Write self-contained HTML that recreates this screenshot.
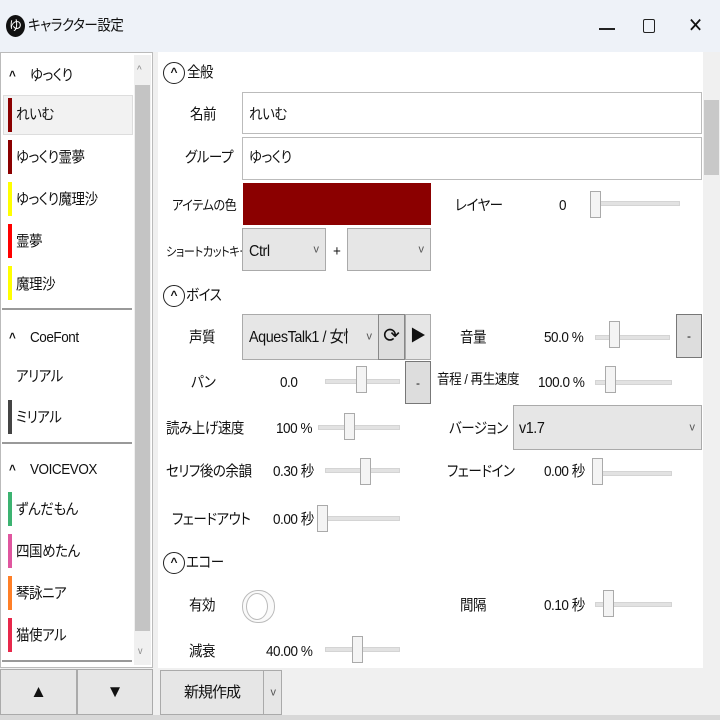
<!DOCTYPE html><html><head><meta charset="utf-8"><style>
*{margin:0;padding:0;box-sizing:border-box}
body{width:720px;height:720px;overflow:hidden;background:#f0f0f0;font-family:"Liberation Sans","Noto Sans CJK JP",sans-serif;font-size:15px;color:#111;position:relative;font-feature-settings:"palt"}
.a{position:absolute}
.t{position:absolute;white-space:nowrap;line-height:20px;transform:translateY(-10px) scaleX(0.9);transform-origin:0 50%;letter-spacing:-0.5px;font-feature-settings:"palt"}
.box{position:absolute;background:#fff;border:1px solid #bbb}
.cb{position:absolute;background:#e6e6e6;border:1px solid #aaa}
.cb i{position:absolute;right:6px;top:50%;transform:translateY(-55%);font-style:normal;font-size:11px;color:#555}
.tr{position:absolute;height:5px;background:#e2e2e2;border:1px solid #d4d4d4}
.th{position:absolute;width:11px;height:27px;background:#f4f4f4;border:1px solid #aaa}
.bar{position:absolute;left:8px;width:4px;height:34px}
.hc{position:absolute;width:22px;height:22px;border:1.5px solid #222;border-radius:50%;font-size:12px;text-align:center;line-height:19px;font-weight:bold}
</style></head><body>
<div class="a" style="left:0;top:0;width:720px;height:52px;background:#eef2f8"></div>
<div class="a" style="left:6px;top:15px;width:19px;height:22px;border-radius:50%;background:#111;color:#fff;font-size:13px;text-align:center;line-height:22px">ゆ</div>
<div class="t" style="left:28px;top:26px;font-size:15px">キャラクター設定</div>
<div class="a" style="left:599px;top:28px;width:16px;height:1.5px;background:#222"></div>
<div class="a" style="left:643px;top:19px;width:12px;height:14px;border:1.5px solid #222;border-radius:2px"></div>
<div class="t" style="left:688px;top:26px;font-size:20px;font-weight:300">✕</div>

<!-- left panel -->
<div class="a" style="left:0;top:52px;width:153px;height:616px;background:#fff;border:1px solid #bbb"></div>
<div class="a" style="left:134px;top:55px;width:17px;height:610px;background:#f0f0f0"></div>
<div class="a" style="left:135px;top:85px;width:15px;height:546px;background:#c4c4c4"></div>
<div class="t" style="left:137px;top:70px;font-size:11px;color:#888">^</div>
<div class="t" style="left:138px;top:652px;font-size:10px;color:#888">v</div>
<div class="a" style="left:3px;top:95px;width:130px;height:40px;background:#f2f2f2;border:1px solid #ddd"></div>
<div class="t" style="left:9px;top:76px;font-weight:bold;font-size:13px">^</div>
<div class="t" style="left:30px;top:76px">ゆっくり</div>
<div class="bar" style="top:98px;background:#8b0000"></div><div class="t" style="left:16px;top:115px">れいむ</div>
<div class="bar" style="top:140px;background:#8b0000"></div><div class="t" style="left:16px;top:158px">ゆっくり霊夢</div>
<div class="bar" style="top:182px;background:#ffff00"></div><div class="t" style="left:16px;top:200px">ゆっくり魔理沙</div>
<div class="bar" style="top:224px;background:#ff0000"></div><div class="t" style="left:16px;top:242px">霊夢</div>
<div class="bar" style="top:266px;background:#ffff00"></div><div class="t" style="left:16px;top:285px">魔理沙</div>
<div class="a" style="left:2px;top:308px;width:130px;height:2px;background:#999"></div>
<div class="t" style="left:9px;top:338px;font-weight:bold;font-size:13px">^</div>
<div class="t" style="left:30px;top:338px">CoeFont</div>
<div class="t" style="left:16px;top:377px">アリアル</div>
<div class="bar" style="top:400px;background:#444"></div><div class="t" style="left:16px;top:418px">ミリアル</div>
<div class="a" style="left:2px;top:442px;width:130px;height:2px;background:#999"></div>
<div class="t" style="left:9px;top:470px;font-weight:bold;font-size:13px">^</div>
<div class="t" style="left:30px;top:470px">VOICEVOX</div>
<div class="bar" style="top:492px;background:#3cb371"></div><div class="t" style="left:16px;top:510px">ずんだもん</div>
<div class="bar" style="top:534px;background:#e0569f"></div><div class="t" style="left:16px;top:552px">四国めたん</div>
<div class="bar" style="top:576px;background:#ff7f27"></div><div class="t" style="left:16px;top:594px">琴詠ニア</div>
<div class="bar" style="top:618px;background:#e8284b"></div><div class="t" style="left:16px;top:636px">猫使アル</div>
<div class="a" style="left:2px;top:660px;width:130px;height:2px;background:#999"></div>
<div class="cb" style="left:0;top:669px;width:77px;height:46px;text-align:center;line-height:44px;font-size:17px">▲</div>
<div class="cb" style="left:77px;top:669px;width:76px;height:46px;text-align:center;line-height:44px;font-size:17px">▼</div>

<!-- right panel -->
<div class="a" style="left:158px;top:52px;width:562px;height:616px;background:#fff"></div>
<div class="a" style="left:703px;top:52px;width:17px;height:616px;background:#f0f0f0"></div>
<div class="a" style="left:704px;top:100px;width:15px;height:75px;background:#c8c8c8"></div>

<div class="hc" style="left:163px;top:62px">^</div><div class="t" style="left:187px;top:73px">全般</div>
<div class="t" style="left:190px;top:115px">名前</div>
<div class="box" style="left:242px;top:92px;width:460px;height:42px"></div><div class="t" style="left:249px;top:115px">れいむ</div>
<div class="t" style="left:185px;top:158px">グループ</div>
<div class="box" style="left:242px;top:137px;width:460px;height:43px"></div><div class="t" style="left:249px;top:158px">ゆっくり</div>
<div class="t" style="left:172px;top:206px;font-size:13.5px">アイテムの色</div>
<div class="a" style="left:243px;top:183px;width:188px;height:42px;background:#8b0000"></div>
<div class="t" style="left:455px;top:206px">レイヤー</div><div class="t" style="left:559px;top:206px">0</div>
<div class="tr" style="left:592px;top:201px;width:88px"></div><div class="th" style="left:590px;top:191px"></div>
<div class="t" style="left:166px;top:252px;font-size:12.5px">ショートカットキー</div>
<div class="cb" style="left:242px;top:228px;width:84px;height:43px"><i>v</i></div><div class="t" style="left:249px;top:252px;font-size:16px">Ctrl</div>
<div class="t" style="left:333px;top:252px">+</div>
<div class="cb" style="left:347px;top:228px;width:84px;height:43px"><i>v</i></div>

<div class="hc" style="left:163px;top:285px">^</div><div class="t" style="left:186px;top:296px">ボイス</div>
<div class="t" style="left:189px;top:338px">声質</div>
<div class="cb" style="left:242px;top:314px;width:137px;height:46px"><i>v</i></div>
<div class="t" style="left:249px;top:338px;width:110px;overflow:hidden;font-size:16px">AquesTalk1 / 女性</div>
<div class="cb" style="left:378px;top:314px;width:27px;height:46px;background:#ddd;border-color:#888;text-align:center;line-height:42px;font-size:20px">⟳</div>
<div class="cb" style="left:405px;top:314px;width:26px;height:46px;text-align:center;line-height:44px;font-size:16px">▶</div>
<div class="t" style="left:460px;top:338px">音量</div><div class="t" style="left:544px;top:338px">50.0 %</div>
<div class="tr" style="left:595px;top:335px;width:75px"></div><div class="th" style="left:609px;top:321px"></div>
<div class="cb" style="left:676px;top:314px;width:26px;height:44px;background:#ddd;border-color:#777;text-align:center;line-height:42px;font-size:12px">-</div>
<div class="t" style="left:191px;top:383px">パン</div><div class="t" style="left:280px;top:383px">0.0</div>
<div class="tr" style="left:325px;top:379px;width:75px"></div><div class="th" style="left:356px;top:366px"></div>
<div class="cb" style="left:405px;top:361px;width:26px;height:43px;background:#ddd;border-color:#777;text-align:center;line-height:42px;font-size:12px">-</div>
<div class="t" style="left:437px;top:379px;font-size:14px">音程 / 再生速度</div><div class="t" style="left:538px;top:383px">100.0 %</div>
<div class="tr" style="left:595px;top:380px;width:77px"></div><div class="th" style="left:605px;top:366px"></div>
<div class="t" style="left:166px;top:429px">読み上げ速度</div><div class="t" style="left:276px;top:429px">100 %</div>
<div class="tr" style="left:318px;top:425px;width:82px"></div><div class="th" style="left:344px;top:413px"></div>
<div class="t" style="left:449px;top:429px">バージョン</div>
<div class="cb" style="left:513px;top:405px;width:189px;height:45px"><i>v</i></div><div class="t" style="left:519px;top:429px;font-size:16px">v1.7</div>
<div class="t" style="left:166px;top:472px">セリフ後の余韻</div><div class="t" style="left:273px;top:472px">0.30 秒</div>
<div class="tr" style="left:325px;top:468px;width:75px"></div><div class="th" style="left:360px;top:458px"></div>
<div class="t" style="left:447px;top:472px">フェードイン</div><div class="t" style="left:544px;top:472px">0.00 秒</div>
<div class="tr" style="left:595px;top:471px;width:77px"></div><div class="th" style="left:592px;top:458px"></div>
<div class="t" style="left:172px;top:520px">フェードアウト</div><div class="t" style="left:273px;top:520px">0.00 秒</div>
<div class="tr" style="left:320px;top:516px;width:80px"></div><div class="th" style="left:317px;top:505px"></div>

<div class="hc" style="left:163px;top:552px">^</div><div class="t" style="left:186px;top:563px">エコー</div>
<div class="t" style="left:189px;top:606px">有効</div>
<div class="a" style="left:242px;top:590px;width:33px;height:33px;border:1.5px solid #bbb;border-radius:16px;background:#fafafa"></div>
<div class="a" style="left:246px;top:593px;width:22px;height:27px;border:1.5px solid #bbb;border-radius:50%;background:#fff"></div>
<div class="t" style="left:460px;top:606px">間隔</div><div class="t" style="left:544px;top:606px">0.10 秒</div>
<div class="tr" style="left:595px;top:602px;width:77px"></div><div class="th" style="left:603px;top:590px"></div>
<div class="t" style="left:189px;top:652px">減衰</div><div class="t" style="left:266px;top:652px">40.00 %</div>
<div class="tr" style="left:325px;top:647px;width:75px"></div><div class="th" style="left:352px;top:636px"></div>

<div class="a" style="left:153px;top:668px;width:567px;height:52px;background:#f0f0f0"></div>
<div class="cb" style="left:160px;top:670px;width:104px;height:45px;text-align:center;line-height:44px;letter-spacing:-1px">新規作成</div>
<div class="cb" style="left:263px;top:670px;width:19px;height:45px"><i style="right:5px">v</i></div>
<div class="a" style="left:0;top:715px;width:720px;height:5px;background:#d8d8d8"></div>
</body></html>
